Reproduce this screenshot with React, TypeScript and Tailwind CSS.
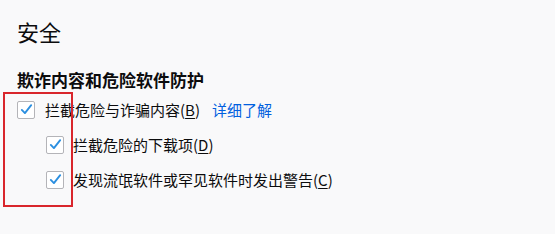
import type { ReactNode } from "react";

function Check({ checked = true }: { checked?: boolean }) {
  return (
    <span className="flex h-[18px] w-[18px] shrink-0 items-center justify-center rounded-[2px] border border-[#b4b4b8] bg-white">
      {checked && (
        <svg viewBox="0 0 16 16" className="h-[15px] w-[15px]" fill="none">
          <path
            d="M3 8.4 L6.3 11.8 L13 3.4"
            stroke="#2b8fe0"
            strokeWidth="2"
            strokeLinecap="round"
            strokeLinejoin="round"
          />
        </svg>
      )}
    </span>
  );
}

function Option({
  label,
  accessKey,
  children,
  nested = false,
}: {
  label: string;
  accessKey: string;
  children?: ReactNode;
  nested?: boolean;
}) {
  return (
    <label className={`flex h-[35px] items-center ${nested ? "pl-[29px]" : ""}`}>
      <Check />
      <span className={`${nested ? "ml-[9px]" : "ml-[10px]"} whitespace-nowrap text-[15px] leading-none text-[#0c0c0d]`}>
        {label}(<span className="underline underline-offset-2">{accessKey}</span>)
      </span>
      {children}
    </label>
  );
}

export default function App() {
  return (
    <div
      className="relative h-[234px] w-[555px] overflow-hidden bg-[#f9f9fa] pl-[17px]"
      style={{ fontFamily: '"Noto Sans CJK SC", "Noto Sans", sans-serif' }}
    >
      <h1 className="pt-[18px] text-[22px] font-normal leading-[26px] text-[#0c0c0d]">
        安全
      </h1>
      <h2 className="mt-[26px] text-[17px] font-bold leading-[20px] text-[#0c0c0d]">
        欺诈内容和危险软件防护
      </h2>
      <div className="mt-[2px] flex flex-col">
        <Option label="拦截危险与诈骗内容" accessKey="B">
          <a className="ml-[12px] whitespace-nowrap text-[15px] leading-none text-[#0060df]">
            详细了解
          </a>
        </Option>
        <Option nested label="拦截危险的下载项" accessKey="D" />
        <Option nested label="发现流氓软件或罕见软件时发出警告" accessKey="C" />
      </div>

      {/* annotation box drawn over the checkboxes */}
      <div className="pointer-events-none absolute left-[3px] top-[92px] h-[115px] w-[70px] border-2 border-[#d9262c]" />
    </div>
  );
}
